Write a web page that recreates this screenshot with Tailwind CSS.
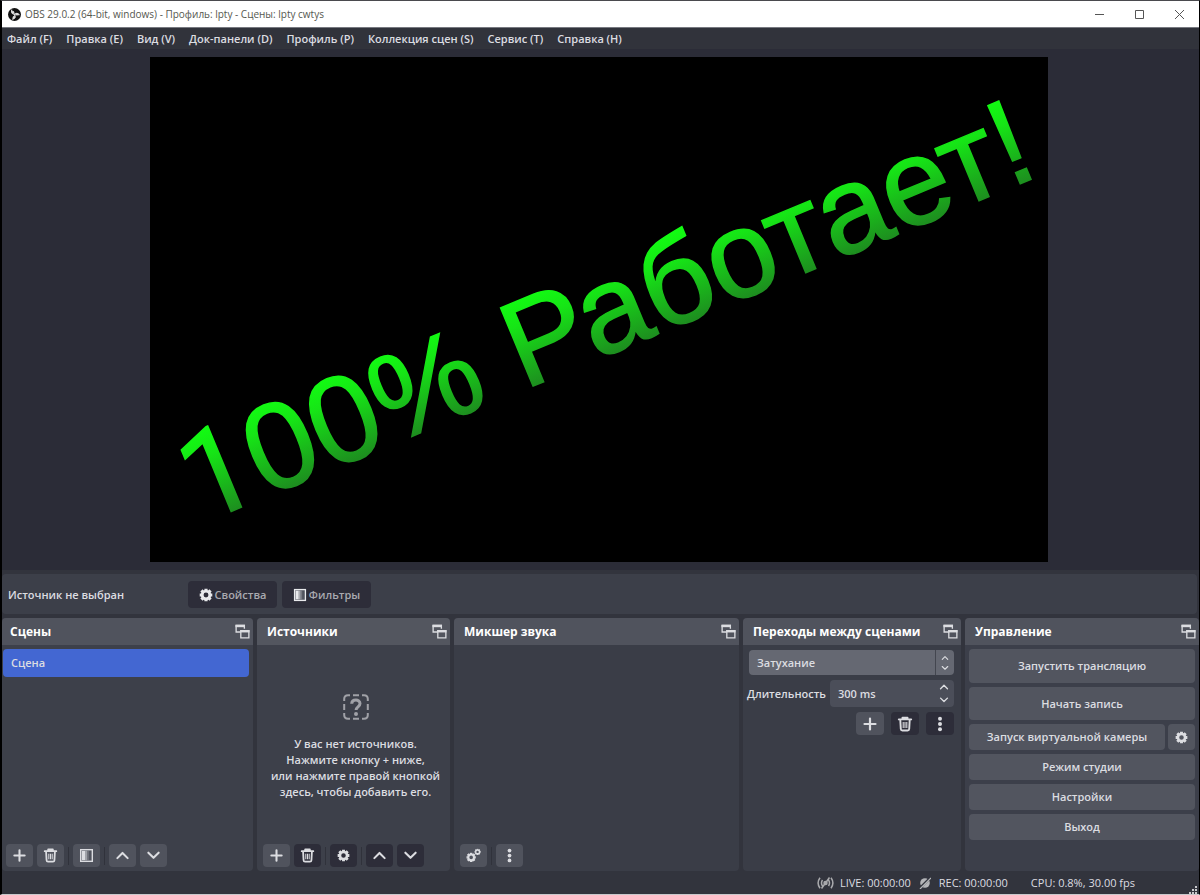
<!DOCTYPE html>
<html lang="ru">
<head>
<meta charset="utf-8">
<title>OBS 29.0.2</title>
<script src="https://cdn.jsdelivr.net/npm/@tailwindcss/browser@4"></script>
</head>
<body class="bg-black">
<svg class="hidden" aria-hidden="true">
  <symbol id="plus" viewBox="0 0 16 16"><path d="M8 2.500v11M2.500 8h11" stroke="currentColor" stroke-width="2.200" stroke-linecap="round"/></symbol>
  <symbol id="trash" viewBox="0 0 16 16"><path d="M1.800 3.400h12.400M5.500 3V1.600h5V3M3.300 4l.5 9q.1 1.500 1.600 1.500h5.200q1.500 0 1.600-1.500l.5-9" fill="none" stroke="currentColor" stroke-width="1.900" stroke-linecap="round" stroke-linejoin="round"/><path d="M6.200 6v6M8 6v6M9.800 6v6" stroke="currentColor" stroke-width="1.100"/></symbol>
  <symbol id="filter" viewBox="0 0 16 16"><rect x="1.800" y="1.800" width="12.400" height="12.400" fill="#50535d" stroke="currentColor" stroke-width="1.500"/><path d="M3 3h3.500v10H3z" fill="currentColor"/><path d="M6.500 3h2v10h-2z" fill="currentColor" opacity=".6"/><path d="M8.500 3h2v10h-2z" fill="currentColor" opacity=".25"/></symbol>
  <symbol id="up" viewBox="0 0 16 16"><path d="M2.500 10.800 8 5.300 13.500 10.800" fill="none" stroke="currentColor" stroke-width="2.200" stroke-linecap="round" stroke-linejoin="round"/></symbol>
  <symbol id="down" viewBox="0 0 16 16"><path d="M2.500 5 8 10.500 13.500 5" fill="none" stroke="currentColor" stroke-width="2.200" stroke-linecap="round" stroke-linejoin="round"/></symbol>
  <symbol id="dots" viewBox="0 0 16 16"><g fill="currentColor"><circle cx="8" cy="2.700" r="2"/><circle cx="8" cy="8" r="2"/><circle cx="8" cy="13.300" r="2"/></g></symbol>
  <symbol id="gear" viewBox="0 0 16 16"><circle cx="8" cy="8" r="4.400" fill="none" stroke="currentColor" stroke-width="3.200"/><g stroke="currentColor" stroke-width="3.600"><path d="M8 .8v2M8 13.200v2M.8 8h2M13.200 8h2M2.800 2.800l1.600 1.600M11.600 11.600l1.600 1.600M2.800 13.200l1.600-1.600M11.600 4.400l1.600-1.600"/></g></symbol>
  <symbol id="gears" viewBox="0 0 16 16"><use href="#gear" x="0" y="4.500" width="11" height="11"/><use href="#gear" x="8.700" y="0.500" width="7.300" height="7.300"/></symbol>
  <symbol id="float" viewBox="0 0 16 16"><path d="M6 8.500H1.200V1.500H10V5" fill="none" stroke="currentColor" stroke-width="1.400"/><path d="M.5.800h10.200v2.600H.5z" fill="currentColor"/><path d="M6.200 7.200h8.600v7.600H6.200z" fill="none" stroke="currentColor" stroke-width="1.400"/><path d="M5.500 6.500h10V9h-10z" fill="currentColor"/></symbol>
</svg>

<div class="flex h-screen flex-col border-y border-r border-l-2 border-t-[#4a4a4e] border-r-black border-b-[#c9c9cc] border-l-black bg-[#32343d] font-['Open_Sans','Noto_Sans',sans-serif] text-[11px] leading-4 font-semibold text-[#dcdde1]">
  <header class="flex h-[26px] shrink-0 items-center bg-white pl-1.5 text-[#55574f]">
    <svg class="size-[13px]" viewBox="0 0 26 26"><circle cx="13" cy="13" r="13" fill="#111"/><g fill="none" stroke="#ddd" stroke-width="2.600" stroke-linecap="round"><path d="M7.500 4.500c-1 4 1 7.500 5.500 8"/><path d="M22 13.500c-2.500-3.500-6.500-3.500-9 0"/><path d="M9.500 22c4.500-1 6-5 3.500-9"/></g><g fill="#ddd"><circle cx="10" cy="8.500" r="2.600"/><circle cx="18" cy="12.500" r="2.600"/><circle cx="12" cy="18.500" r="2.600"/></g></svg>
    <h1 class="ml-1 grow text-[10px] font-medium">OBS 29.0.2 (64-bit, windows) - Профиль: lpty - Сцены: lpty cwtys</h1>
    <button aria-label="Свернуть" class="flex w-10 justify-center"><svg class="size-[11px]" viewBox="0 0 11 11"><path d="M1 5.500h9" stroke="#555"/></svg></button>
    <button aria-label="Развернуть" class="flex w-10 justify-center"><svg class="size-[11px]" viewBox="0 0 11 11"><path d="M1.500 1.500h8v8h-8z" fill="none" stroke="#555"/></svg></button>
    <button aria-label="Закрыть" class="flex w-10 justify-center"><svg class="size-[11px]" viewBox="0 0 11 11"><path d="m1 1 9 9M10 1l-9 9" stroke="#555"/></svg></button>
  </header>
  <nav class="flex h-[22px] shrink-0 items-center gap-3.5 border-t border-[#777980] bg-[#31333b] pl-[5px]">
    <a href="#">Файл (F)</a><a href="#">Правка (E)</a><a href="#">Вид (V)</a><a href="#">Док-панели (D)</a><a href="#">Профиль (P)</a><a href="#">Коллекция сцен (S)</a><a href="#">Сервис (T)</a><a href="#">Справка (H)</a>
  </nav>

  <main class="flex min-h-0 flex-1 justify-center bg-[#2b2c37] py-2 pr-1">
    <svg class="h-full max-w-full overflow-visible bg-black" viewBox="0 0 898 505" role="img" aria-label="100% Работает!">
      <defs><linearGradient id="green" gradientUnits="userSpaceOnUse" x1="0" y1="-88" x2="0" y2="0"><stop offset="0" stop-color="#12fc12"/><stop offset=".3" stop-color="#16e516"/><stop offset="1" stop-color="#1d8f1f"/></linearGradient></defs>
      <text transform="translate(51 467) rotate(-22.560)" font-family="Liberation Sans, Arial, sans-serif" font-weight="400" font-size="123" fill="url(#green)" stroke="url(#green)" stroke-width="1.500"><tspan font-family="Roboto">1</tspan>00% Работает!</text>
    </svg>
  </main>

  <section class="mt-1 mr-0.5 mb-1 flex h-10 shrink-0 items-center rounded bg-[#3c3f49] pt-px pl-1.5" aria-label="Источник">
    <span class="w-[180px]">Источник не выбран</span>
    <button class="flex h-[27px] w-[89px] items-center justify-center gap-0.5 rounded bg-[#2d2d39] text-[#a9aab0]"><svg class="size-3.5 text-[#e8e9ec]"><use href="#gear"/></svg>Свойства</button>
    <button class="ml-[5px] flex h-[27px] w-[89px] items-center justify-center gap-0.5 rounded bg-[#2d2d39] text-[#a9aab0]"><svg class="size-3.5 text-[#e8e9ec]"><use href="#filter"/></svg>Фильтры</button>
  </section>

  <div class="grid h-[253px] shrink-0 grid-cols-[251fr_193fr_285fr_218fr_234fr] gap-1">
    <section class="flex min-w-0 flex-col rounded bg-[#3d404a]">
      <div class="flex h-[27px] shrink-0 items-center justify-between rounded-t bg-[#50535d] pr-[3px] pl-2"><h2 class="text-[12px] font-bold text-white">Сцены</h2><button aria-label="Открепить"><svg class="block size-[15px]"><use href="#float"/></svg></button></div>
      <ul class="grow pt-1 pr-1 pl-px"><li class="flex h-7 items-center rounded bg-[#4367d2] pl-2">Сцена</li></ul>
      <div class="flex items-center gap-1 pb-1 pl-1">
        <button aria-label="Добавить" class="flex h-[23px] w-[27px] items-center justify-center rounded bg-[#50535d]"><svg class="size-[15px]"><use href="#plus"/></svg></button>
        <button aria-label="Удалить" class="flex h-[23px] w-[27px] items-center justify-center rounded bg-[#50535d]"><svg class="size-[15px]"><use href="#trash"/></svg></button>
        <i class="h-[18px] w-px bg-[#30323b]"></i>
        <button aria-label="Фильтры сцены" class="flex h-[23px] w-[27px] items-center justify-center rounded bg-[#50535d]"><svg class="size-[15px]"><use href="#filter"/></svg></button>
        <i class="h-[18px] w-px bg-[#30323b]"></i>
        <button aria-label="Выше" class="flex h-[23px] w-[27px] items-center justify-center rounded bg-[#50535d]"><svg class="size-[15px]"><use href="#up"/></svg></button>
        <button aria-label="Ниже" class="flex h-[23px] w-[27px] items-center justify-center rounded bg-[#50535d]"><svg class="size-[15px]"><use href="#down"/></svg></button>
      </div>
    </section>

    <section class="flex min-w-0 flex-col rounded bg-[#3d404a]">
      <div class="flex h-[27px] shrink-0 items-center justify-between rounded-t bg-[#53565f] pr-[3px] pl-2.5"><h2 class="text-[12px] font-bold text-white">Источники</h2><button aria-label="Открепить"><svg class="block size-[15px]"><use href="#float"/></svg></button></div>
      <div class="flex grow flex-col items-center justify-center gap-4 pt-2 pl-1 text-center">
        <svg class="size-[26px] text-[#a0a1a7]" viewBox="0 0 26 26" fill="none" stroke="currentColor" stroke-width="2"><path d="M1.200 7V5q0-3.800 3.800-3.800h2M10 1.200h6M19 1.200h2q3.800 0 3.800 3.800v2M24.800 10v6M24.800 19v2q0 3.800-3.800 3.800h-2M16 24.800h-6M7 24.800H5q-3.800 0-3.800-3.800v-2M1.200 16v-6"/><path d="M8.700 9.800C8.900 4.800 17 5 17 9.500c0 3.300-3.900 3.300-3.900 6.500" stroke-width="3"/><circle cx="13" cy="20" r="1"/></svg>
        <p class="whitespace-nowrap">У вас нет источников.<br>Нажмите кнопку + ниже,<br>или нажмите правой кнопкой<br>здесь, чтобы добавить его.</p>
      </div>
      <div class="flex items-center gap-1 pt-1 pb-1 pl-1.5">
        <button aria-label="Добавить" class="flex h-[23px] w-[27px] items-center justify-center rounded bg-[#50535d]"><svg class="size-[15px]"><use href="#plus"/></svg></button>
        <button aria-label="Удалить" class="flex h-[23px] w-[27px] items-center justify-center rounded bg-[#2d2d39]"><svg class="size-[15px]"><use href="#trash"/></svg></button>
        <i class="h-[18px] w-px bg-[#30323b]"></i>
        <button aria-label="Свойства" class="flex h-[23px] w-[27px] items-center justify-center rounded bg-[#2d2d39]"><svg class="size-[13px]"><use href="#gear"/></svg></button>
        <i class="h-[18px] w-px bg-[#30323b]"></i>
        <button aria-label="Выше" class="flex h-[23px] w-[27px] items-center justify-center rounded bg-[#2d2d39]"><svg class="size-[15px]"><use href="#up"/></svg></button>
        <button aria-label="Ниже" class="flex h-[23px] w-[27px] items-center justify-center rounded bg-[#2d2d39]"><svg class="size-[15px]"><use href="#down"/></svg></button>
      </div>
    </section>

    <section class="flex min-w-0 flex-col rounded bg-[#3a3d47]">
      <div class="flex h-[27px] shrink-0 items-center justify-between rounded-t bg-[#50535d] pr-[3px] pl-2.5"><h2 class="text-[12px] font-bold text-white">Микшер звука</h2><button aria-label="Открепить"><svg class="block size-[15px]"><use href="#float"/></svg></button></div>
      <div class="grow"></div>
      <div class="flex items-center gap-1 pb-1 pl-1.5">
        <button aria-label="Расширенные свойства звука" class="flex h-[23px] w-[27px] items-center justify-center rounded bg-[#50535d]"><svg class="size-[15px]"><use href="#gears"/></svg></button>
        <i class="h-[18px] w-px bg-[#30323b]"></i>
        <button aria-label="Меню" class="flex h-[23px] w-[27px] items-center justify-center rounded bg-[#50535d]"><svg class="size-[15px]"><use href="#dots"/></svg></button>
      </div>
    </section>

    <section class="flex min-w-0 flex-col rounded bg-[#3a3d47]">
      <div class="flex h-[27px] shrink-0 items-center justify-between rounded-t bg-[#50535d] pr-[3px] pl-2.5"><h2 class="text-[12px] font-bold whitespace-nowrap text-white">Переходы между сценами</h2><button aria-label="Открепить"><svg class="block size-[15px]"><use href="#float"/></svg></button></div>
      <div class="flex flex-col gap-[5px] pt-[5px] pr-[7px] pl-1">
        <div class="relative ml-0.5">
          <select aria-label="Переход" class="block h-[25px] w-full appearance-none rounded bg-[#656872] pl-2"><option>Затухание</option></select>
          <span class="pointer-events-none absolute inset-y-0 right-0 flex w-[19px] flex-col items-center justify-center gap-0.5 border-l border-[#43464f]"><svg class="size-2"><use href="#up"/></svg><svg class="size-2"><use href="#down"/></svg></span>
        </div>
        <div class="flex items-center gap-1">
          <label for="duration">Длительность</label>
          <div class="relative min-w-0 grow">
            <input id="duration" type="text" value="300 ms" class="block h-[27px] w-full rounded bg-[#4b4e59] pl-2">
            <span class="absolute inset-y-0 right-[5px] flex flex-col justify-center gap-[3px]"><button aria-label="Больше"><svg class="block size-2.5"><use href="#up"/></svg></button><button aria-label="Меньше"><svg class="block size-2.5"><use href="#down"/></svg></button></span>
          </div>
        </div>
        <div class="flex justify-end gap-[7px]">
          <button aria-label="Добавить" class="flex h-[23px] w-7 items-center justify-center rounded bg-[#50535d]"><svg class="size-4"><use href="#plus"/></svg></button>
          <button aria-label="Удалить" class="flex h-[23px] w-7 items-center justify-center rounded bg-[#2d2d39]"><svg class="size-4"><use href="#trash"/></svg></button>
          <button aria-label="Меню" class="flex h-[23px] w-7 items-center justify-center rounded bg-[#2d2d39]"><svg class="size-4"><use href="#dots"/></svg></button>
        </div>
      </div>
    </section>

    <section class="flex min-w-0 flex-col rounded bg-[#3c3f4a]">
      <div class="flex h-[27px] shrink-0 items-center justify-between rounded-t bg-[#50535d] pr-[3px] pl-2.5"><h2 class="text-[12px] font-bold text-white">Управление</h2><button aria-label="Открепить"><svg class="block size-[15px]"><use href="#float"/></svg></button></div>
      <div class="flex flex-col gap-1 pt-1 pr-1 pl-1">
        <button class="h-[34px] shrink-0 rounded bg-[#52555f]">Запустить трансляцию</button>
        <button class="h-[33px] shrink-0 rounded bg-[#52555f]">Начать запись</button>
        <div class="flex gap-[3px]"><button class="h-[26px] grow rounded bg-[#52555f]">Запуск виртуальной камеры</button><button aria-label="Настройки камеры" class="flex h-[26px] w-[27px] items-center justify-center rounded bg-[#52555f]"><svg class="size-[13px]"><use href="#gear"/></svg></button></div>
        <button class="h-[26px] rounded bg-[#52555f]">Режим студии</button>
        <button class="h-[26px] rounded bg-[#52555f]">Настройки</button>
        <button class="h-[26px] rounded bg-[#52555f]">Выход</button>
      </div>
    </section>
  </div>

  <footer class="flex h-[23px] shrink-0 items-center justify-end pt-px font-medium">
    <svg class="mr-1.5 h-3 w-[17px] text-[#a9aaad]" viewBox="0 0 17 12" fill="none" stroke="currentColor" stroke-width="1.500"><path d="M3 .8Q-.8 6 3 11.200M14 .8q3.800 5.200 0 10.400M5.500 3q-2 3 0 6M11.500 3q2 3 0 6M4.500 11.500l8-11"/><circle cx="8.500" cy="6" r="1.500" fill="currentColor"/></svg>
    <span>LIVE: 00:00:00</span>
    <svg class="mr-2 ml-2 size-3 text-[#b4b5b8]" viewBox="0 0 12 12"><circle cx="6" cy="6" r="4.800" fill="currentColor"/><path d="M.5 11.500l11-11" stroke="#32343d" stroke-width="2.400"/><path d="M1 12 12 1" stroke="currentColor" stroke-width="1.200"/></svg>
    <span>REC: 00:00:00</span>
    <span class="mr-[54px] ml-[23px]">CPU: 0.8%, 30.00 fps</span>
    <svg class="mr-0.5 size-2 self-end" viewBox="0 0 8 8"><path d="M6 0h2v2H6zM3 3h2v2H3zM6 3h2v2H6zM0 6h2v2H0zM3 6h2v2H3zM6 6h2v2H6z" fill="#c8c9cc"/></svg>
  </footer>
</div>
</body>
</html>
